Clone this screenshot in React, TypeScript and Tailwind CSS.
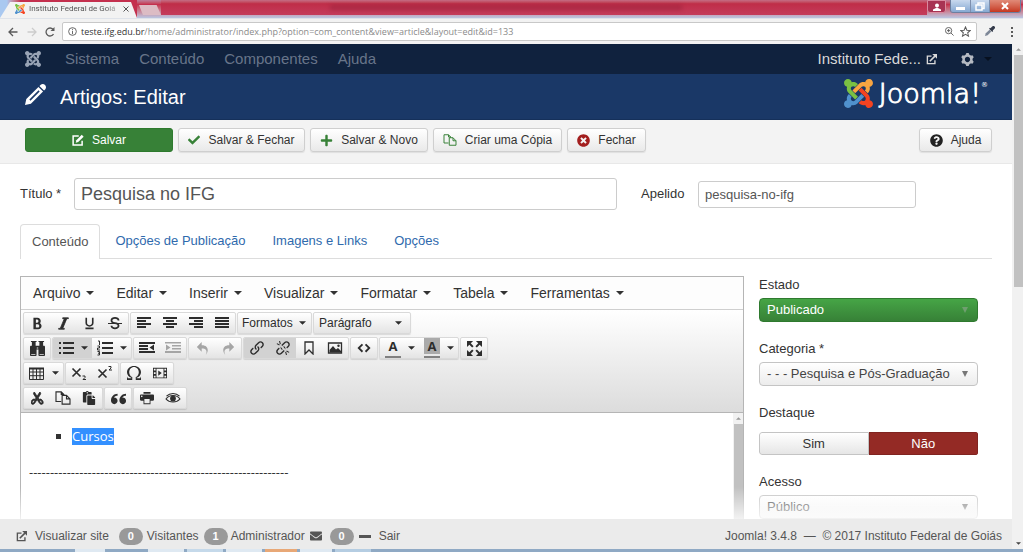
import type { ReactNode } from "react";
import {
  ImBinoculars, ImBold, ImCog, ImEmbed, ImEnlarge, ImFilm, ImItalic, ImLink, ImOmega, ImPencil,
  ImPrinter, ImQuotesLeft, ImRedo2, ImScissors, ImStrikethrough, ImUnderline, ImUndo2,
} from "react-icons/im";
import { FaCheck, FaEnvelope, FaPaste, FaPlus, FaQuestionCircle, FaTimesCircle } from "react-icons/fa";

const JOOMLA_PARTS = [
  { color: "#7ac143", d: "M.6 92.1C.6 58.8 27.4 32 60.4 32c30 0 54.5 21.9 59.2 50.2 32.6-7.6 67.1.6 96.5 30l-44.3 44.3c-20.5-20.5-42.6-16.3-55.4-3.5-14.3 14.3-14.3 37.9 0 52.2l99.5 99.5-44 44.3c-87.7-87.2-49.7-49.7-99.8-99.7-26.8-26.5-35-64.8-24.8-98.9C20.4 144.6.6 120.7.6 92.1z" },
  { color: "#f9a541", d: "M130.1 208.5l44.3 44.3c10-10 89.7-89.7 99.7-99.8 14.3-14.3 37.6-14.3 51.9 0 12.8 12.8 17 35-3.5 55.4l44 44.3c31.2-31.2 38.5-67.6 28.9-101.2 29.2-4.1 51.9-29.2 51.9-59.5 0-33.2-26.8-60.1-59.8-60.1-30.3 0-55.4 22.5-59.5 51.6-33.8-9.9-71.7-1.5-98.3 25.1-18.3 19.1-71.1 71.5-99.6 99.9z" },
  { color: "#f44321", d: "M396.4 360.7c8.2-32.7-.9-68.5-26.3-93.9-11.8-12.2 5 4.7-99.5-99.7l-44.3 44.3 99.7 99.7c14.3 14.3 14.3 37.6 0 51.9-12.8 12.8-35 17-55.4-3.5l-44 44.3c27.6 30.2 68 38.8 102.7 28 5.5 27.4 29.7 48.1 58.9 48.1 33 0 59.8-26.8 59.8-60.1 0-30.2-22.5-55-51.6-59.1z" },
  { color: "#5091cd", d: "M312.1 307.6l-44-44.3c-87 86.4-50.4 50.4-99.7 99.8-14.3 14.3-37.6 14.3-51.9 0-13.1-13.4-16.9-35.3 3.2-55.4l-44-44.3c-30.2 30.2-38 65.2-29.5 98.3-26.7 6-46.2 29.9-46.2 58.2C0 453.2 26.8 480 59.8 480c28.6 0 52.5-19.8 58.6-46.7 32.7 8.2 68.5-.6 94.2-26 32.1-32 12.2-12.4 99.5-99.7z" },
];

function JoomlaMark({ className, mono }: { className: string; mono?: boolean }) {
  return (
    <svg viewBox="0 32 448 448" className={className} aria-hidden="true">
      {JOOMLA_PARTS.map((p) => (
        <path key={p.color} d={p.d} fill={mono ? "currentColor" : p.color} />
      ))}
    </svg>
  );
}

function Caret({ className = "h-1 w-2" }: { className?: string }) {
  return (
    <svg viewBox="0 0 8 4" className={className} fill="currentColor" aria-hidden="true">
      <path d="M0 0h8L4 4z" />
    </svg>
  );
}

function ExternalIcon({ className }: { className: string }) {
  return (
    <svg viewBox="0 0 16 16" className={className} fill="none" stroke="currentColor" strokeWidth="2" aria-hidden="true">
      <path d="M8 3H2v11h11V9" />
      <path d="M5.500 10.500 13 3" strokeWidth="2.400" />
      <path d="M9 0h7v7z" fill="currentColor" stroke="none" />
    </svg>
  );
}

function EditIcon({ className }: { className: string }) {
  return (
    <svg viewBox="0 0 16 16" className={className} fill="none" stroke="currentColor" strokeWidth="2" aria-hidden="true">
      <path d="M9 2.500H1.500v12h12V9" />
      <path d="M5 11.500l.8-3.300L13 1l2.500 2.500-7.200 7.200z" fill="currentColor" stroke="none" />
    </svg>
  );
}

function CopyIcon({ className }: { className: string }) {
  return (
    <svg viewBox="0 0 18 16" className={className} fill="none" stroke="currentColor" strokeWidth="1.300" aria-hidden="true">
      <path d="M7 12H1V1h6l3 3v1M7 1v3h3" />
      <path d="M8 5h5l4 4v6H8zM13 5v4h4" />
    </svg>
  );
}

function Lines({ rows }: { rows: [number, number][] }) {
  return (
    <svg viewBox="0 0 16 14" className="h-[14px] w-4" fill="currentColor" aria-hidden="true">
      {rows.map(([x, w], i) => (
        <rect key={i} x={x} y={1 + i * 3} width={w} height="2" />
      ))}
    </svg>
  );
}

function BulletList() {
  return (
    <svg viewBox="0 0 16 14" className="h-[14px] w-4" fill="currentColor" aria-hidden="true">
      {[1, 6, 11].map((y) => (
        <g key={y}>
          <rect x="1" y={y} width="2" height="2" />
          <rect x="5" y={y} width="11" height="2" />
        </g>
      ))}
    </svg>
  );
}

function NumberList() {
  return (
    <svg viewBox="0 0 16 16" className="size-4" fill="currentColor" aria-hidden="true">
      <path d="M5 2h11v2H5zM5 7h11v2H5zM5 12h11v2H5z" />
      <path d="M1 1h1.500v4M.5 6h2v2h-2v2h2.500M.5 11.500h2v3.500h-2M1 13.200h1.500" fill="none" stroke="currentColor" strokeWidth="1" />
    </svg>
  );
}

function IndentIcon({ out }: { out?: boolean }) {
  return (
    <svg viewBox="0 0 16 14" className="h-[14px] w-4" fill="currentColor" aria-hidden="true">
      <path d={out ? "M0 1h16v2H0zM0 4h9v2H0zM0 7h9v2H0zM0 10h16v2H0zM15 3.500v6L10.500 6.500z" : "M0 1h16v1.500H0zM7 4h9v1.500H7zM7 7h9v1.500H7zM0 10h16v2H0zM1 3.500v6L5.500 6.500z"} />
    </svg>
  );
}

function UnlinkIcon() {
  return (
    <span className="relative flex">
      <ImLink className="size-[14px]" />
      <svg viewBox="0 0 16 16" className="absolute inset-0 size-[14px]" aria-hidden="true">
        <path d="M5 5l6 6" stroke="#d2d2d2" strokeWidth="2" />
        <path d="M1 3l3 1.500M4 0l1 3.500M15 13l-3-1.500M12 16l-1-3.500" stroke="currentColor" strokeWidth="1.200" />
      </svg>
    </span>
  );
}

function BookmarkIcon() {
  return (
    <svg viewBox="0 0 10 14" className="h-[14px] w-[10px]" fill="none" stroke="currentColor" strokeWidth="1.300" aria-hidden="true">
      <path d="M1 1h8v12L5 9l-4 4z" />
    </svg>
  );
}

function PictureIcon() {
  return (
    <svg viewBox="0 0 16 14" className="h-[14px] w-4" fill="currentColor" aria-hidden="true">
      <path d="M1.500 2h13v10h-13z" fill="none" stroke="currentColor" strokeWidth="1.300" />
      <path d="M2.500 11.500V9l3.500-4 3 3.500 2-1.500 3 3v1.500z" />
      <circle cx="11.500" cy="4.700" r="1.200" />
    </svg>
  );
}

function EyeIcon() {
  return (
    <svg viewBox="0 0 16 14" className="h-[14px] w-4" fill="none" stroke="currentColor" strokeWidth="1.100" aria-hidden="true">
      <path d="M1 8c3.500-4.700 10.500-4.700 14 0-3.500 4-10.500 4-14 0z" />
      <path d="M1.500 5.200C5 1.600 11 1.600 14.500 5.200" />
      <circle cx="8" cy="7.600" r="2.300" fill="currentColor" />
    </svg>
  );
}

function TableIcon() {
  return (
    <svg viewBox="0 0 15 13" className="h-[13px] w-[15px]" fill="none" stroke="currentColor" aria-hidden="true">
      <path d="M.5 1.500h14v11H.5zM.5 5h14M.5 8.700h14M4 2v10M7.500 2v10M11 2v10" />
      <path d="M0 1.500h15" strokeWidth="2" />
    </svg>
  );
}

function LetterColor({ marked }: { marked?: boolean }) {
  return (
    <span className="flex h-5 w-4 flex-col items-center border-b-2 border-[#808080]">
      <span className={marked ? "w-full bg-[#aaa] text-center font-['Open_Sans',sans-serif] text-[13px] leading-4 font-bold" : "w-full text-center font-['Open_Sans',sans-serif] text-[13px] leading-4 font-bold"}>A</span>
    </span>
  );
}

function Script({ sup }: { sup?: boolean }) {
  return (
    <svg viewBox="0 0 16 16" className="size-4" fill="none" stroke="currentColor" aria-hidden="true">
      <path d={sup ? "M1.500 4.500l8 8M9.500 4.500l-8 8" : "M1.500 3.500l8 8M9.500 3.500l-8 8"} strokeWidth="1.700" />
      <path d={sup ? "M11.500 1.500h2.500v1.500l-2 2h3" : "M11.500 11h2.500v1.500l-2 2h3"} />
    </svg>
  );
}

function Group({ children }: { children: ReactNode }) {
  return (
    <div className="flex h-[22px] overflow-hidden rounded-[2px] border border-[#d9d9d9] bg-linear-to-b from-white to-[#e4e4e4] shadow-[0_1px_1px_rgba(0,0,0,0.12)]">
      {children}
    </div>
  );
}

function Tool({ label, children, active, dim }: { label: string; children: ReactNode; active?: boolean; dim?: boolean }) {
  const look = active ? "bg-[#d2d2d2]" : dim ? "text-[#a5a5a5]" : "";
  return (
    <button type="button" aria-label={label} disabled={dim} className={`flex w-[26px] items-center justify-center ${look}`}>
      {children}
    </button>
  );
}

function SplitTool({ label, children, active }: { label: string; children: ReactNode; active?: boolean }) {
  return (
    <button
      type="button"
      aria-label={label}
      className={active ? "flex w-[39px] items-center justify-between bg-[#d2d2d2] pr-1 pl-[5px]" : "flex w-[39px] items-center justify-between pr-1 pl-[5px]"}
    >
      {children}
      <Caret className="h-[4px] w-[7px]" />
    </button>
  );
}

function ActionButton({ icon, children, className }: { icon: ReactNode; children: ReactNode; className: string }) {
  return (
    <button type="button" className={`flex h-6 items-center justify-center gap-2 rounded-[3px] border border-[#cfcfcf] bg-linear-to-b from-white to-[#e9e9e9] text-xs text-[#333] shadow-[0_1px_1px_rgba(0,0,0,0.08)] ${className}`}>
      {icon}
      {children}
    </button>
  );
}

function SelectField({ id, label, value, green }: { id: string; label: string; value: string; green?: boolean }) {
  const look = green
    ? "border-[#2f7a2f] bg-linear-to-b from-[#46a546] to-[#378137] text-white"
    : "border-[#c4c4c4] bg-linear-to-b from-white to-[#ececec] text-[#444]";
  return (
    <div className="mb-[18px] flex flex-col gap-1">
      <label htmlFor={id} className="leading-[18px]">{label}</label>
      <div className="relative flex">
        <select id={id} className={`h-6 w-full appearance-none rounded-[4px] border pr-6 pl-[7px] text-[13px] ${look}`}>
          <option>{value}</option>
        </select>
        <svg viewBox="0 0 6 6" className={green ? "pointer-events-none absolute top-[9px] right-[10px] size-[6px] text-[#6f9f6f]" : "pointer-events-none absolute top-[9px] right-[10px] size-[6px] text-[#777]"} fill="currentColor" aria-hidden="true">
          <path d="M0 0h6L3 6z" />
        </svg>
      </div>
    </div>
  );
}

function CountBadge({ children }: { children: ReactNode }) {
  return <span className="w-6 rounded-full bg-[#999] text-center text-[11px] leading-[17px] font-bold text-white">{children}</span>;
}

const MENUS = ["Arquivo", "Editar", "Inserir", "Visualizar", "Formatar", "Tabela", "Ferramentas"];

function BrowserChrome() {
  return (
    <>
      <div className="flex h-[18px] shrink-0 items-start bg-linear-to-b from-[#bd7f9c] via-[#c4304e] via-25% to-[#b9c6e2]">
        <div className="flex h-[18px] shrink-0 bg-linear-to-r from-[#a9c8f0] from-5% to-[#c4304e] to-15%">
          <div className="flex h-[18px] w-[137px] items-center gap-1 bg-[#f2f2f2] pr-2 pl-[15px] font-[Roboto,sans-serif] text-[8px] text-[#555] [clip-path:polygon(10px_2px,131px_2px,137px_100%,0_100%)]">
            <JoomlaMark className="size-[10px] shrink-0" />
            <span className="flex-1 whitespace-nowrap [mask-image:linear-gradient(to_right,black_85%,#0003)]">Instituto Federal de Goiá</span>
            <button type="button" aria-label="Fechar guia" className="flex">
              <svg viewBox="0 0 6 6" className="size-[6px]" stroke="currentColor" aria-hidden="true"><path d="M.5.5l5 5M5.500.5l-5 5" /></svg>
            </button>
          </div>
        </div>
        <button type="button" aria-label="Nova guia" className="mt-[5px] ml-[2px] h-[10px] w-[22px] bg-[#dcbcc4] [clip-path:polygon(0_0,80%_0,100%_100%,18%_100%)]" />
        <div className="flex h-[15px] flex-1 items-center bg-linear-to-b from-[#c46d85] via-[#bf2d48] via-25% to-[#c43c5c]">
          <span className="ml-[22%] h-[5px] w-[46%] bg-[#8f1d35]/45 blur-[2px]" />
        </div>
        <div className="flex h-[13px]">
          <button type="button" aria-label="Usuário" className="mr-1 flex w-[19px] items-center justify-center rounded-b-[3px] border border-[#d98ba0] bg-[#a83353] text-white">
            <svg viewBox="0 0 8 8" className="size-2" fill="currentColor" aria-hidden="true"><circle cx="4" cy="2.500" r="2" /><path d="M0 8V6.500L4 4.500l4 2V8z" /></svg>
          </button>
          <div className="flex overflow-hidden rounded-b-[3px] border border-t-0 border-[#6d7f9f]">
            <button type="button" aria-label="Minimizar" className="flex w-[19px] items-end justify-center bg-linear-to-b from-[#c9d9ee] to-[#86a9d2] pb-[2px]">
              <span className="h-[3px] w-[9px] bg-white" />
            </button>
            <button type="button" aria-label="Restaurar" className="flex w-5 items-center justify-center border-x border-[#7d8fae] bg-linear-to-b from-[#c9d9ee] to-[#86a9d2]">
              <svg viewBox="0 0 10 9" className="h-[9px] w-[10px]" fill="none" stroke="#fff" strokeWidth="1.500" aria-hidden="true"><path d="M3 2.500V1h6v5.500H7.500M1 3h6v5H1z" /></svg>
            </button>
            <button type="button" aria-label="Fechar janela" className="flex w-[30px] items-center justify-center bg-linear-to-b from-[#e08a78] to-[#c5361f]">
              <svg viewBox="0 0 8 8" className="size-2" stroke="#fff" strokeWidth="2" aria-hidden="true"><path d="M1 1l6 6M7 1L1 7" /></svg>
            </button>
          </div>
          <div className="w-[2px]" />
        </div>
      </div>
      <div className="flex h-[26px] shrink-0 items-center border-t border-[#dfe3ea] bg-[#f2f2f2] pr-[9px] pl-2 text-[#5a5a5a]">
        <button type="button" aria-label="Voltar" className="flex">
          <svg viewBox="0 0 10 10" className="size-[10px]" fill="none" stroke="currentColor" strokeWidth="1.300" aria-hidden="true"><path d="M9.500 5H1M5 1L1 5l4 4" /></svg>
        </button>
        <button type="button" aria-label="Avançar" className="ml-[9px] flex text-[#ccc]">
          <svg viewBox="0 0 10 10" className="size-[10px]" fill="none" stroke="currentColor" strokeWidth="1.300" aria-hidden="true"><path d="M.5 5H9M5 1l4 4-4 4" /></svg>
        </button>
        <button type="button" aria-label="Recarregar" className="ml-2 flex">
          <svg viewBox="0 0 10 10" className="size-[10px]" fill="none" stroke="currentColor" strokeWidth="1.300" aria-hidden="true"><path d="M8.500 7A4 4 0 1 1 8 2.300" /><path d="M9.500 0v4h-4z" fill="currentColor" stroke="none" /></svg>
        </button>
        <div className="ml-[7px] flex h-[19px] flex-1 items-center gap-1 rounded-[2px] border border-[#c8c8c8] bg-white px-[5px]">
          <svg viewBox="0 0 10 10" className="size-[9px]" fill="none" stroke="currentColor" aria-hidden="true"><circle cx="5" cy="5" r="4.300" /><path d="M5 4.200V8M5 2v1.200" /></svg>
          <p className="flex-1 font-['Open_Sans',sans-serif] text-[9px] leading-4 text-[#8a8a8a]">
            <span className="text-[#333]">teste.ifg.edu.br</span>/home/administrator/index.php?option=com_content&amp;view=article&amp;layout=edit&amp;id=133
          </p>
          <svg viewBox="0 0 10 10" className="mr-[2px] size-[9px]" fill="none" stroke="currentColor" aria-hidden="true"><circle cx="4" cy="4" r="3.500" /><path d="M6.700 6.700L9.500 9.500M2.200 4h3.600M4 2.200v3.600" /></svg>
          <svg viewBox="0 0 24 24" className="size-[11px]" fill="none" stroke="currentColor" strokeWidth="2.200" aria-hidden="true"><path d="M12 2l3 7.200 7.500.6-5.700 5 1.800 7.400L12 18.200l-6.600 4 1.800-7.400-5.700-5 7.500-.6z" /></svg>
        </div>
        <svg viewBox="0 0 12 12" className="ml-[7px] size-[11px]" aria-hidden="true"><path d="M1 11l1-3 4-4 2 2-4 4z" fill="#7d8797" /><path d="M5.500 3l3.500 3.500 1-1L9.500 5 11.500 3A1.500 1.500 0 0 0 9 .5L7 2.500 6.500 2z" fill="#333a4a" /></svg>
        <button type="button" aria-label="Menu" className="ml-4 flex w-[3px] flex-col gap-[2px]">
          <span className="size-[2px] bg-[#5a5a5a]" /><span className="size-[2px] bg-[#5a5a5a]" /><span className="size-[2px] bg-[#5a5a5a]" />
        </button>
      </div>
    </>
  );
}

function Editor() {
  return (
    <section className="flex min-w-0 flex-1 flex-col border border-b-0 border-[#b5b5b5]">
      <div className="flex h-[33px] shrink-0 items-center border-b border-[#cfcfcf] bg-[#fdfdfd] pl-px">
        {MENUS.map((m) => (
          <button key={m} type="button" className="flex items-center gap-[6px] px-[11px] text-sm text-[#333]">
            {m}
            <Caret />
          </button>
        ))}
      </div>
      <div className="flex shrink-0 flex-col gap-[3px] border-b border-[#b5b5b5] bg-linear-to-b from-white to-[#dcdcdc] px-[2px] pt-[2px] pb-[3px] text-[#2d2d2d]">
        <div className="flex gap-px">
          <Group>
            <Tool label="Negrito"><ImBold className="size-[13px]" /></Tool>
            <Tool label="Itálico"><ImItalic className="size-[13px] stroke-1" /></Tool>
            <Tool label="Sublinhado"><ImUnderline className="size-[13px]" /></Tool>
            <Tool label="Tachado"><ImStrikethrough className="size-[14px]" /></Tool>
          </Group>
          <Group>
            <Tool label="Alinhar à esquerda"><Lines rows={[[1, 14], [1, 9], [1, 14], [1, 9]]} /></Tool>
            <Tool label="Centralizar"><Lines rows={[[1, 14], [4, 8], [1, 14], [4, 8]]} /></Tool>
            <Tool label="Alinhar à direita"><Lines rows={[[1, 14], [6, 9], [1, 14], [6, 9]]} /></Tool>
            <Tool label="Justificar"><Lines rows={[[1, 14], [1, 14], [1, 14], [1, 14]]} /></Tool>
          </Group>
          <Group>
            <button type="button" className="flex w-[73px] items-center justify-between pr-[5px] pl-1 text-xs">Formatos<Caret className="h-[4px] w-[7px]" /></button>
          </Group>
          <Group>
            <button type="button" className="flex w-24 items-center justify-between pr-2 pl-[5px] text-xs">Parágrafo<Caret className="h-[4px] w-[7px]" /></button>
          </Group>
        </div>
        <div className="flex gap-px">
          <Group><Tool label="Localizar"><ImBinoculars className="size-[15px]" /></Tool></Group>
          <Group>
            <SplitTool label="Lista" active><BulletList /></SplitTool>
            <SplitTool label="Lista numerada"><NumberList /></SplitTool>
          </Group>
          <Group>
            <Tool label="Diminuir recuo"><IndentIcon out /></Tool>
            <Tool label="Aumentar recuo" dim><IndentIcon /></Tool>
          </Group>
          <Group>
            <Tool label="Desfazer" dim><ImUndo2 className="size-[13px]" /></Tool>
            <Tool label="Refazer" dim><ImRedo2 className="size-[13px]" /></Tool>
          </Group>
          <Group>
            <Tool label="Inserir link" active><ImLink className="size-[14px]" /></Tool>
            <Tool label="Remover link" active><UnlinkIcon /></Tool>
            <Tool label="Âncora"><BookmarkIcon /></Tool>
            <Tool label="Imagem"><PictureIcon /></Tool>
          </Group>
          <Group><Tool label="Código"><ImEmbed className="size-[14px]" /></Tool></Group>
          <Group>
            <SplitTool label="Cor do texto"><LetterColor /></SplitTool>
            <SplitTool label="Cor de fundo"><LetterColor marked /></SplitTool>
          </Group>
          <Group><Tool label="Tela cheia"><ImEnlarge className="size-[15px]" /></Tool></Group>
        </div>
        <div className="flex gap-px">
          <Group><SplitTool label="Tabela"><TableIcon /></SplitTool></Group>
          <Group>
            <Tool label="Subscrito"><Script /></Tool>
            <Tool label="Sobrescrito"><Script sup /></Tool>
          </Group>
          <Group>
            <Tool label="Caracteres especiais"><ImOmega className="size-[14px]" /></Tool>
            <Tool label="Vídeo"><ImFilm className="size-[14px]" /></Tool>
          </Group>
        </div>
        <div className="flex gap-px">
          <Group>
            <Tool label="Recortar"><ImScissors className="size-[13px] stroke-1" /></Tool>
            <Tool label="Copiar"><CopyIcon className="h-[14px] w-4" /></Tool>
            <Tool label="Colar"><FaPaste className="size-[14px]" /></Tool>
          </Group>
          <Group><Tool label="Citação"><ImQuotesLeft className="size-[15px]" /></Tool></Group>
          <Group>
            <Tool label="Imprimir"><ImPrinter className="size-[14px]" /></Tool>
            <Tool label="Visualizar"><EyeIcon /></Tool>
          </Group>
        </div>
      </div>
      <div className="flex min-h-0 flex-1 font-['Open_Sans',sans-serif] text-[13px] leading-[18px] text-[#333]">
        <div className="flex-1 px-2 pt-[14px]">
          <ul className="ml-[43px] list-[square]">
            <li><span className="inline-block bg-[#3390ff] leading-[17px] text-white">Cursos</span></li>
          </ul>
          <p className="mt-[18px]">--------------------------------------------------------------</p>
        </div>
        <div className="flex w-[10px] flex-col items-center bg-[#f1f1f1]">
          <span className="flex h-[11px] items-center text-[#999]"><Caret className="h-[3px] w-[5px] rotate-180" /></span>
          <span className="w-[9px] flex-1 bg-[#c1c1c1]" />
        </div>
      </div>
    </section>
  );
}

export default function App() {
  return (
    <div className="flex h-screen flex-col overflow-hidden bg-white font-['Liberation_Sans',Arial,sans-serif] text-[13px] text-[#333]">
      <BrowserChrome />
      <div className="flex min-h-0 flex-1">
        <div className="flex min-w-0 flex-1 flex-col">
          <nav className="flex h-[30px] shrink-0 items-center gap-5 bg-[#10223e] pr-5 pl-[25px] text-[15px] text-[#68758a]">
            <a href="#painel" aria-label="Painel" className="mr-1 text-[#99a4b5]"><JoomlaMark mono className="size-4" /></a>
            <a href="#sistema">Sistema</a>
            <a href="#conteudo">Conteúdo</a>
            <a href="#componentes">Componentes</a>
            <a href="#ajuda">Ajuda</a>
            <a href="#site" className="ml-auto flex items-center gap-[5px] text-[#d9d9d9]">
              Instituto Fede...
              <ExternalIcon className="size-[11px]" />
            </a>
            <button type="button" aria-label="Configurações" className="ml-1 flex items-center gap-[10px] text-[#b5bac2]">
              <ImCog className="size-[13px]" />
              <Caret className="h-1 w-2 text-[#07101f]" />
            </button>
          </nav>
          <header className="flex h-[46px] shrink-0 items-center border-b border-[#15305a] bg-[#1a3867] pr-6 pl-[25px] text-white">
            <ImPencil className="mr-[14px] mb-1 size-[21px]" />
            <h1 className="flex-1 text-xl">Artigos: Editar</h1>
            <JoomlaMark className="mb-[6px] size-[29px]" />
            <span className="ml-[6px] flex items-start pb-[5px] font-['DejaVu_Sans',sans-serif] text-[27px] leading-8 font-extralight [-webkit-text-stroke:1px_white]">
              Joomla!<span className="pt-1 text-[7px] leading-[7px] font-normal [-webkit-text-stroke:0]">®</span>
            </span>
          </header>
          <div className="flex h-[44px] shrink-0 items-start gap-[5px] border-b border-[#e8e8e8] bg-[#f3f3f3] px-5 pt-2">
            <button type="button" className="ml-[5px] flex h-6 w-[148px] items-center justify-center gap-2 rounded-[3px] border border-[#2e7a2e] bg-[#378137] text-xs text-white">
              <EditIcon className="size-3" />
              Salvar
            </button>
            <ActionButton className="w-[127px]" icon={<FaCheck className="size-3 text-[#378137]" />}>Salvar &amp; Fechar</ActionButton>
            <ActionButton className="w-[118px]" icon={<FaPlus className="size-[13px] text-[#378137]" />}>Salvar &amp; Novo</ActionButton>
            <ActionButton className="w-[129px]" icon={<CopyIcon className="h-3 w-[14px] text-[#378137]" />}>Criar uma Cópia</ActionButton>
            <ActionButton className="w-[79px]" icon={<FaTimesCircle className="size-[13px] text-[#a31f1f]" />}>Fechar</ActionButton>
            <ActionButton className="ml-auto w-[73px]" icon={<FaQuestionCircle className="size-[13px] text-[#222]" />}>Ajuda</ActionButton>
          </div>
          <main className="relative flex min-h-0 flex-1 flex-col overflow-hidden px-5 pt-[14px]">
            <form className="flex items-center">
              <label htmlFor="titulo" className="w-[54px]">Título *</label>
              <input id="titulo" type="text" defaultValue="Pesquisa no IFG" className="h-8 flex-1 rounded-[3px] border border-[#ccc] px-[6px] text-lg text-[#555]" />
              <label htmlFor="apelido" className="ml-6 w-[57px]">Apelido</label>
              <input id="apelido" type="text" defaultValue="pesquisa-no-ifg" className="mr-19 h-[27px] w-[218px] rounded-[3px] border border-[#ccc] px-[6px] text-[13px] text-[#555]" />
            </form>
            <div role="tablist" className="mt-[14px] flex shrink-0 gap-[3px] border-b border-[#ddd] text-[#2f6aad]">
              <button type="button" role="tab" aria-selected="true" className="-mb-px h-[35px] rounded-t-[4px] border border-b-0 border-[#ddd] bg-white px-[11px] text-[#555]">Conteúdo</button>
              <button type="button" role="tab" aria-selected="false" className="px-3">Opções de Publicação</button>
              <button type="button" role="tab" aria-selected="false" className="px-3">Imagens e Links</button>
              <button type="button" role="tab" aria-selected="false" className="px-3">Opções</button>
            </div>
            <div className="mt-[17px] flex min-h-0 flex-1 gap-[15px]">
              <Editor />
              <aside className="w-[233px] shrink-0 pr-[14px]">
                <SelectField id="estado" label="Estado" value="Publicado" green />
                <SelectField id="categoria" label="Categoria *" value="- - - Pesquisa e Pós-Graduação" />
                <fieldset className="mb-[18px]">
                  <legend className="mb-[10px] leading-[18px]">Destaque</legend>
                  <div className="flex h-[23px] overflow-hidden rounded-[3px] leading-[21px]">
                    <label className="flex-1 rounded-l-[3px] border border-[#c4c4c4] bg-linear-to-b from-white to-[#e6e6e6] text-center">
                      <input type="radio" name="destaque" className="sr-only" />
                      Sim
                    </label>
                    <label className="flex-1 border border-[#802420] bg-[#942a25] text-center text-white">
                      <input type="radio" name="destaque" defaultChecked className="sr-only" />
                      Não
                    </label>
                  </div>
                </fieldset>
                <SelectField id="acesso" label="Acesso" value="Público" />
              </aside>
            </div>
            <div className="pointer-events-none absolute inset-x-0 bottom-0 h-8 bg-linear-to-b from-transparent to-white/80" />
          </main>
          <footer className="flex h-[30px] shrink-0 items-center bg-[#ebebeb] pt-1 pr-[10px] pl-4 text-xs text-[#555]">
            <a href="#visualizar" className="mr-[10px] flex items-center gap-2"><ExternalIcon className="size-[11px]" />Visualizar site</a>
            <CountBadge>0</CountBadge>
            <span className="mr-[5px] ml-1">Visitantes</span>
            <CountBadge>1</CountBadge>
            <span className="ml-[3px]">Administrador</span>
            <FaEnvelope className="mr-2 ml-[5px] size-3" />
            <CountBadge>0</CountBadge>
            <a href="#sair" className="ml-[5px] flex items-center gap-2"><span className="h-[3px] w-3 bg-[#555]" />Sair</a>
            <span className="ml-auto whitespace-pre">Joomla! 3.4.8  —  © 2017 Instituto Federal de Goiás</span>
          </footer>
        </div>
        <div className="flex w-[11px] shrink-0 flex-col items-center bg-[#f1f1f1] pl-px">
          <span className="flex h-[11px] items-center text-[#999]"><Caret className="h-[3px] w-[5px] rotate-180" /></span>
          <span className="h-[46%] w-[9px] bg-[#c1c1c1]" />
          <span className="mt-auto flex h-3 items-center text-[#444]"><Caret className="h-[3px] w-[5px]" /></span>
        </div>
      </div>
      <div className="flex h-[3px] shrink-0 gap-[3px] bg-[#8fa9c4] pl-[75px]">
        <span className="w-[30px] bg-[#dfe9f2]" />
        <span className="ml-10 w-9 bg-[#dfe9f2]" />
        <span className="w-9 bg-[#c5d9ea]" />
        <span className="w-9 bg-[#dfe9f2]" />
        <span className="w-8 bg-[#e8a877]" />
        <span className="w-8 bg-[#dfe9f2]" />
        <span className="w-9 bg-[#b5cde2]" />
      </div>
    </div>
  );
}
